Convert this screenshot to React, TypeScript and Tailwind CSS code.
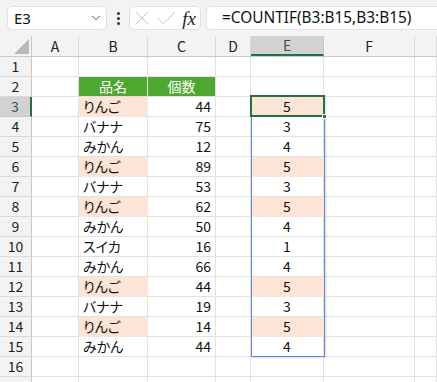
import { ChevronDown, X, Check } from 'lucide-react'

const DATA = [
  { name: 'りんご', qty: 44 },
  { name: 'バナナ', qty: 75 },
  { name: 'みかん', qty: 12 },
  { name: 'りんご', qty: 89 },
  { name: 'バナナ', qty: 53 },
  { name: 'りんご', qty: 62 },
  { name: 'みかん', qty: 50 },
  { name: 'スイカ', qty: 16 },
  { name: 'みかん', qty: 66 },
  { name: 'りんご', qty: 44 },
  { name: 'バナナ', qty: 19 },
  { name: 'りんご', qty: 14 },
  { name: 'みかん', qty: 44 },
]

const COLS = ['A', 'B', 'C', 'D', 'E', 'F', '']
const GRID = 'grid grid-cols-[32px_47px_69px_68px_35px_73px_91px_1fr]'
const CELL = 'h-[20px] border-r border-b border-[#e1e1e1] flex items-center'
const PEACH = 'bg-[#fce4d6]'

function countOf(name: string) {
  return DATA.filter(d => d.name === name).length
}

function RowHeader({ n }: { n: number }) {
  const active = n === 3
  return (
    <div
      className={
        'h-[20px] border-b flex items-center justify-center ' +
        (active
          ? 'bg-[#d2d2d2] border-[#c6c6c6] border-r-2 border-r-[#217346] text-[#2b5c3f]'
          : 'bg-[#f3f3f3] border-[#dadada] border-r border-r-[#c8c8c8] text-[#222]')
      }
    >
      {n}
    </div>
  )
}

function Row({ n }: { n: number }) {
  const d = n >= 3 && n <= 15 ? DATA[n - 3] : null
  const apple = d?.name === 'りんご'
  if (n === 2) {
    return (
      <>
        <RowHeader n={n} />
        <div className={CELL} />
        <div className={CELL + ' bg-[#4ea72e] border-[#4ea72e] justify-center text-white'}>品名</div>
        <div className={CELL + ' bg-[#4ea72e] border-r-[#e1e1e1] border-b-[#e1e1e1] justify-center text-white'}>個数</div>
        <div className={CELL} />
        <div className={CELL} />
        <div className={CELL} />
        <div className={CELL} />
      </>
    )
  }
  return (
    <>
      <RowHeader n={n} />
      <div className={CELL} />
      <div className={CELL + ' pl-[4px] ' + (apple ? PEACH + ' border-[#fce4d6]' : '')}>{d?.name}</div>
      <div className={CELL + ' justify-end pr-[4px]'}>{d?.qty}</div>
      <div className={CELL} />
      <div className={CELL + ' justify-center ' + (apple ? PEACH + ' border-[#fce4d6]' : '')}>
        {d ? countOf(d.name) : null}
      </div>
      <div className={CELL} />
      <div className={CELL} />
    </>
  )
}

export default function App() {
  return (
    <div className="relative w-[437px] h-[382px] overflow-hidden bg-white text-[14px] text-[#111] font-['Noto_Sans_CJK_JP',sans-serif] [font-feature-settings:'palt']">
      {/* Formula bar */}
      <div className="h-[36px] bg-[#f3f3f3] flex items-center gap-[5px] pl-[7px] font-['Noto_Sans',sans-serif] text-[15px]">
        <div className="w-[100px] h-[24px] rounded-[5px] border border-[#e2e2e2] bg-white flex items-center justify-between pl-[6px] pr-[3px]">
          <span>E3</span>
          <ChevronDown size={14} strokeWidth={1.6} className="text-[#444]" />
        </div>
        <div className="w-[12px] flex flex-col items-center gap-[2px]">
          <span className="w-[3px] h-[3px] rounded-full bg-[#333]" />
          <span className="w-[3px] h-[3px] rounded-full bg-[#333]" />
          <span className="w-[3px] h-[3px] rounded-full bg-[#333]" />
        </div>
        <div className="w-[72px] h-[24px] rounded-[5px] border border-[#e2e2e2] bg-white flex items-center justify-between pl-0 pr-[4px]">
          <X size={24} strokeWidth={0.8} className="text-[#b8b8b8]" />
          <Check size={25} strokeWidth={0.8} className="text-[#b8b8b8] -ml-[4px]" />
          <span className="font-['Liberation_Serif',serif] italic text-[19px] text-[#222] leading-none">fx</span>
        </div>
        <div className="flex-1 h-[24px] rounded-l-[5px] border border-r-0 border-[#e2e2e2] bg-white flex items-center pl-[15px] text-[15.4px] text-[#111]">
          =COUNTIF(B3:B15,B3:B15)
        </div>
      </div>

      {/* Column headers */}
      <div className={GRID + ' bg-[#f3f3f3] border-b border-[#c8c8c8]'}>
        <div className="h-[20px] border-r border-[#c8c8c8] flex items-end justify-end pr-[2px] pb-[2px]">
          <svg width="15" height="15" viewBox="0 0 15 15">
            <polygon points="15,0 15,15 0,15" fill="#b9b9b9" />
          </svg>
        </div>
        {COLS.map(c => (
          <div
            key={c || 'x'}
            className={
              'h-[20px] flex items-center justify-center ' +
              (c === 'E'
                ? 'bg-[#d2d2d2] border-r border-[#c6c6c6] border-b-2 border-b-[#217346] -mb-[1px] text-[#2b5c3f]'
                : 'border-r border-[#dadada] text-[#222]')
            }
          >
            {c}
          </div>
        ))}
      </div>

      {/* Cells */}
      <div className={GRID}>
        {Array.from({ length: 17 }, (_, i) => (
          <Row key={i} n={i + 1} />
        ))}
      </div>

      {/* Spill range outline E3:E15 */}
      <div className="absolute left-[251px] top-[96px] w-[74px] h-[261px] border border-[#5b8bd0] shadow-[1px_1px_2px_rgba(0,0,0,0.15)] pointer-events-none" />
      {/* Active cell E3 */}
      <div className="absolute left-[250px] top-[95px] w-[75px] h-[22px] border-2 border-[#217346] pointer-events-none" />
      <div className="absolute left-[322px] top-[114px] w-[5px] h-[5px] bg-[#217346] border border-white pointer-events-none" />
    </div>
  )
}
